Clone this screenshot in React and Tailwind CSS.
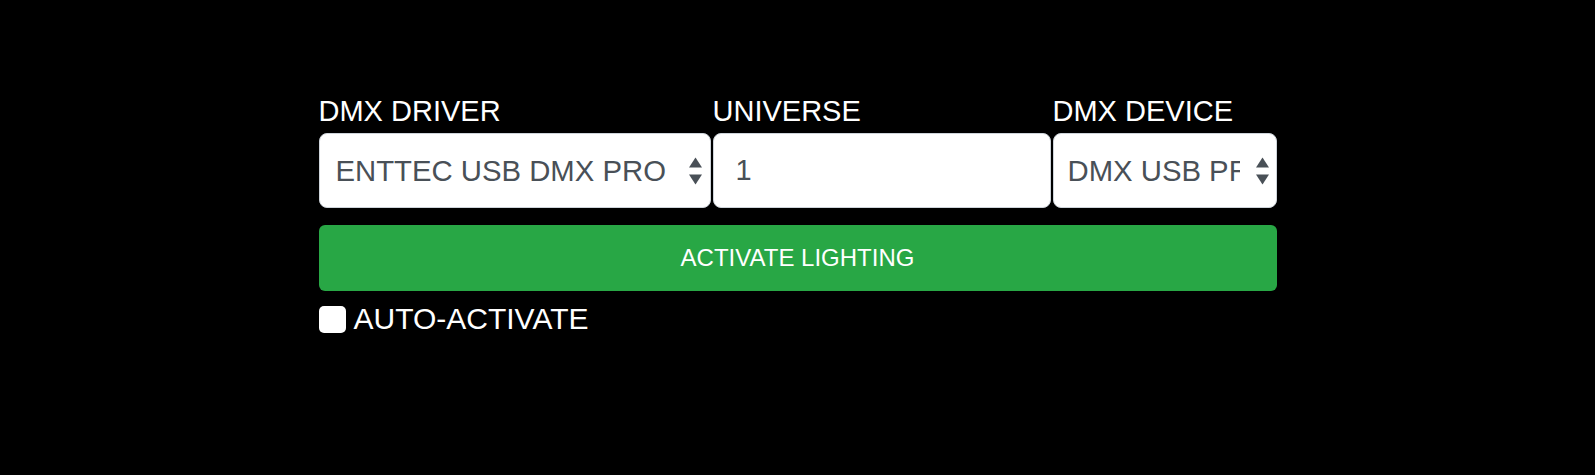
import { useState } from 'react';

function Arrows({ className }) {
    return (
        <svg
            width="13"
            height="29"
            viewBox="0 0 13 29"
            className={`pointer-events-none absolute top-1/2 -translate-y-1/2 ${className}`}
        >
            <polygon points="0,11 6.5,1 13,11" fill="#495057" />
            <polygon points="0,18 13,18 6.5,28" fill="#495057" />
        </svg>
    );
}

export default function App() {
    const [driver, setDriver] = useState('enttec');
    const [universe, setUniverse] = useState('1');
    const [device, setDevice] = useState('dmxusbpro');
    const [auto, setAuto] = useState(false);

    const font = { fontFamily: '"Liberation Sans", Arial, sans-serif' };

    return (
        <div className="min-h-[475px] w-full bg-black" style={font}>
            <div className="mx-auto w-[958px] pt-[94px]">
                <div className="flex gap-[2px]">
                    <div className="flex w-[392px] flex-col">
                        <label className="mb-[5px] text-[29px] leading-[34px] text-white">DMX DRIVER</label>
                        <div className="relative">
                            <select
                                value={driver}
                                onChange={(e) => setDriver(e.target.value)}
                                className="h-[75px] w-full appearance-none rounded-[8px] border border-[#ced4da] bg-white pl-[16px] pr-[40px] text-[29.3px] text-[#495057] outline-none"
                            >
                                <option value="enttec">ENTTEC USB DMX PRO</option>
                                <option value="opendmx">ENTTEC OPEN DMX</option>
                            </select>
                            <Arrows className="right-[9px]" />
                        </div>
                    </div>

                    <div className="flex w-[338px] flex-col">
                        <label className="mb-[5px] text-[29px] leading-[34px] text-white">UNIVERSE</label>
                        <input
                            type="text"
                            value={universe}
                            onChange={(e) => setUniverse(e.target.value)}
                            className="h-[75px] w-full rounded-[8px] border border-[#ced4da] bg-white pl-[22px] pr-4 text-[29px] text-[#495057] outline-none"
                        />
                    </div>

                    <div className="flex w-[224px] flex-col">
                        <label className="mb-[5px] text-[29px] leading-[34px] text-white">DMX DEVICE</label>
                        <div className="relative">
                            <select
                                value={device}
                                onChange={(e) => setDevice(e.target.value)}
                                className="h-[75px] w-full appearance-none rounded-[8px] border border-[#ced4da] bg-white pl-[14px] pr-[36px] text-[29.3px] text-[#495057] outline-none"
                            >
                                <option value="dmxusbpro">DMX USB PRO</option>
                            </select>
                            <Arrows className="right-[8px]" />
                        </div>
                    </div>
                </div>

                <button
                    type="button"
                    className="mt-[17px] flex h-[66px] w-full items-center justify-center rounded-[6px] bg-[#28a745] text-[24px] text-white"
                >
                    ACTIVATE LIGHTING
                </button>

                <label className="mt-[11px] flex items-center gap-[8px] text-[30px] leading-[34px] text-white">
                    <input
                        type="checkbox"
                        checked={auto}
                        onChange={(e) => setAuto(e.target.checked)}
                        className="h-[27px] w-[27px] appearance-none rounded-[5px] bg-white checked:bg-[#28a745]"
                    />
                    AUTO-ACTIVATE
                </label>
            </div>
        </div>
    );
}
